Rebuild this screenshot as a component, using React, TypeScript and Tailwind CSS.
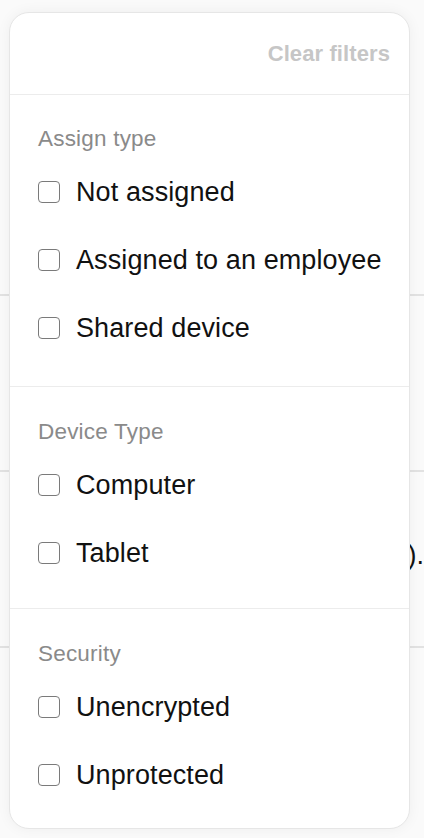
import React from "react";

type Section = {
  title: string;
  options: string[];
  pt: string;
  pb: string;
};

const sections: Section[] = [
  {
    title: "Assign type",
    options: ["Not assigned", "Assigned to an employee", "Shared device"],
    pt: "pt-[30px]",
    pb: "pb-[24px]",
  },
  { title: "Device Type", options: ["Computer", "Tablet"], pt: "pt-[31px]", pb: "pb-[21px]" },
  { title: "Security", options: ["Unencrypted", "Unprotected"], pt: "pt-[31px]", pb: "pb-[19px]" },
];

function CheckRow({ label }: { label: string }) {
  return (
    <label className="flex h-[68px] cursor-pointer items-center gap-[16px]">
      <span className="h-[22px] w-[22px] shrink-0 rounded-[4px] border border-[#7a7a7a] bg-white" />
      <span className="text-[27px] leading-[32px] tracking-[0.1px] text-[#111111]">{label}</span>
    </label>
  );
}

export default function App() {
  return (
    <div
      className="relative min-h-[838px] w-full overflow-hidden bg-[#fafafa]"
      style={{ fontFamily: '"Liberation Sans", Arial, Helvetica, sans-serif' }}
    >
      {/* Device list underneath the filter popover */}
      <div className="flex flex-col">
        <div className="h-[294px]" />
        <div className="h-[2px] bg-[#e2e2e2]" />
        <div className="h-[174px]" />
        <div className="h-[2px] bg-[#e2e2e2]" />
        <div className="flex h-[174px] flex-col justify-center pb-[8px]">
          <div className="flex justify-end text-[27px] leading-[32px] text-[#111111]">
            Device model (iPad).
          </div>
        </div>
        <div className="h-[2px] bg-[#e2e2e2]" />
      </div>

      {/* Filter popover */}
      <div className="absolute left-[9px] top-[12px] w-[401px] rounded-[20px] border border-[#e6e6e6] bg-white shadow-[0_0_14px_rgba(0,0,0,0.05)]">
        <div className="flex h-[82px] items-center justify-end border-b border-[#ececec] pr-[19px]">
          <button className="text-[22px] font-bold leading-[28px] tracking-[0.1px] text-[#c6c6c6]">
            Clear filters
          </button>
        </div>
        {sections.map((s, i) => (
          <div
            key={s.title}
            className={`pl-[28px] ${s.pt} ${s.pb} ${
              i < sections.length - 1 ? "border-b border-[#ececec]" : ""
            }`}
          >
            <div className="h-[28px] text-[22.5px] leading-[28px] tracking-[0.2px] text-[#8a8a8a]">
              {s.title}
            </div>
            <div className="mt-[5px] flex flex-col">
              {s.options.map((o) => (
                <CheckRow key={o} label={o} />
              ))}
            </div>
          </div>
        ))}
      </div>
    </div>
  );
}
